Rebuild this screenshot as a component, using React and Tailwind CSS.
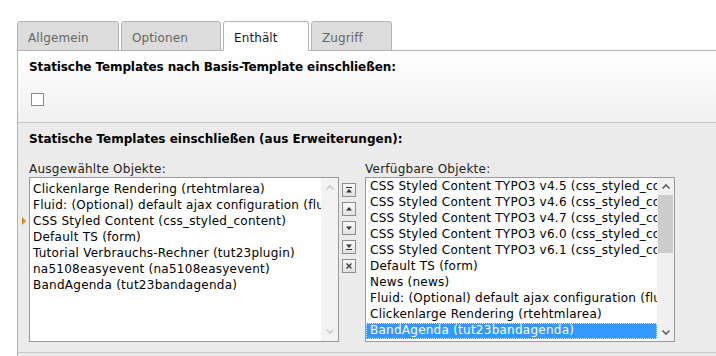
const SELECTED = [
  'Clickenlarge Rendering (rtehtmlarea)',
  'Fluid: (Optional) default ajax configuration (fluid)',
  'CSS Styled Content (css_styled_content)',
  'Default TS (form)',
  'Tutorial Verbrauchs-Rechner (tut23plugin)',
  'na5108easyevent (na5108easyevent)',
  'BandAgenda (tut23bandagenda)',
]

const AVAILABLE = [
  'CSS Styled Content TYPO3 v4.5 (css_styled_content_45)',
  'CSS Styled Content TYPO3 v4.6 (css_styled_content_46)',
  'CSS Styled Content TYPO3 v4.7 (css_styled_content_47)',
  'CSS Styled Content TYPO3 v6.0 (css_styled_content_60)',
  'CSS Styled Content TYPO3 v6.1 (css_styled_content_61)',
  'Default TS (form)',
  'News (news)',
  'Fluid: (Optional) default ajax configuration (fluid)',
  'Clickenlarge Rendering (rtehtmlarea)',
  'BandAgenda (tut23bandagenda)',
]

const TABS = [
  { label: 'Allgemein', w: 'w-[102px]' },
  { label: 'Optionen', w: 'w-[100px]' },
  { label: 'Enthält', w: 'w-[86px]', active: true },
  { label: 'Zugriff', w: 'w-[81px]' },
]

function Chevron({ up, color }) {
  return (
    <svg width="10" height="7" viewBox="0 0 10 7">
      <path d={up ? 'M1.5 5.5 L5 2 L8.5 5.5' : 'M1.5 1.5 L5 5 L8.5 1.5'} fill="none" stroke={color} strokeWidth="1.6" />
    </svg>
  )
}

function MoveButton({ kind }) {
  return (
    <div className="w-[14px] h-[14px] border border-[#8c8c8c] bg-gradient-to-b from-[#fafafa] to-[#e2e2e2] flex items-center justify-center">
      <svg width="12" height="12" viewBox="0 0 12 12">
        {kind === 'top' && (<>
          <rect x="3" y="3" width="6" height="1" fill="#333" />
          <path d="M6 5 L3 8.5 L9 8.5 Z" fill="#333" />
        </>)}
        {kind === 'up' && <path d="M6 4 L3 7.5 L9 7.5 Z" fill="#333" />}
        {kind === 'down' && <path d="M3 4.5 L9 4.5 L6 8 Z" fill="#333" />}
        {kind === 'bottom' && (<>
          <path d="M3 3.5 L9 3.5 L6 7 Z" fill="#333" />
          <rect x="3" y="8" width="6" height="1" fill="#333" />
        </>)}
        {kind === 'remove' && <path d="M3.5 3.5 L8.5 8.5 M8.5 3.5 L3.5 8.5" stroke="#333" strokeWidth="1.2" />}
      </svg>
    </div>
  )
}

export default function App() {
  return (
    <div className="w-[716px] h-[356px] overflow-hidden bg-white pt-[21px] pl-[17px] text-[12px] text-black" style={{ fontFamily: '"DejaVu Sans", Verdana, sans-serif' }}>

      {/* tabs */}
      <div className="flex items-end gap-[2px] h-[29px]">
        {TABS.map(t => (
          <div
            key={t.label}
            className={`${t.w} h-[30px] mb-[-1px] pl-[10px] pt-[7px] border border-[#b4b4b4] rounded-t-[3px] tracking-[0.1px] ${t.active ? 'bg-white border-b-white text-[#1a1a1a] relative z-10' : 'bg-[#dcdcdc] text-[#666]'}`}
          >
            {t.label}
          </div>
        ))}
      </div>

      {/* panel */}
      <div className="border-l border-t border-[#b4b4b4] w-[720px]">

        <div className="h-[72px] bg-gradient-to-b from-white to-[#f0f0f0] border-b border-[#c6c6c6] pl-[11px] pt-[8px]">
          <div className="font-bold leading-[16px] tracking-[-0.1px]">Statische Templates nach Basis-Template einschließen:</div>
          <div className="mt-[18px] ml-[2px] w-[13px] h-[13px] border border-[#8a8a8a] bg-white" />
        </div>

        <div className="h-[230px] bg-[#ebebeb] border-b border-[#c6c6c6] pl-[11px] pt-[8px]">
          <div className="font-bold leading-[16px]">Statische Templates einschließen (aus Erweiterungen):</div>

          <div className="flex mt-[15px] tracking-[0.25px]">
            <div className="w-[310px]">
              <div className="leading-[14px] text-[#222]">Ausgewählte Objekte:</div>
              <div className="relative mt-[1px] h-[165px] border border-[#9a9a9a] bg-white flex">
                <div className="flex-1 overflow-hidden pl-[3px] pt-[3px]">
                  {SELECTED.map(s => (
                    <div key={s} className="leading-[16px] whitespace-nowrap">{s}</div>
                  ))}
                </div>
                <div className="w-[17px] bg-[#f3f3f3] flex flex-col items-center justify-between py-[6px]">
                  <Chevron up color="#c8c8c8" />
                  <Chevron color="#c8c8c8" />
                </div>
                <svg className="absolute left-[-8px] top-[39px]" width="4" height="8" viewBox="0 0 4 8">
                  <path d="M0 0 L4 4 L0 8 Z" fill="#d08a1a" />
                </svg>
              </div>
            </div>

            <div className="ml-[3px] mt-[21px] flex flex-col gap-[5px]">
              <MoveButton kind="top" />
              <MoveButton kind="up" />
              <MoveButton kind="down" />
              <MoveButton kind="bottom" />
              <MoveButton kind="remove" />
            </div>

            <div className="ml-[9px] w-[310px]">
              <div className="leading-[14px] text-[#222]">Verfügbare Objekte:</div>
              <div className="mt-[1px] h-[165px] border border-[#9a9a9a] bg-white flex">
                <div className="flex-1 overflow-hidden pt-[1px]">
                  {AVAILABLE.map((s, i) => (
                    <div
                      key={s}
                      className={`h-[16px] leading-[15px] pl-[4px] whitespace-nowrap ${i === AVAILABLE.length - 1 ? 'bg-[#3399ff] text-white outline outline-1 outline-dotted outline-[#cfe6ff] outline-offset-[-1px]' : ''}`}
                    >
                      {s}
                    </div>
                  ))}
                </div>
                <div className="w-[17px] bg-[#f0f0f0] flex flex-col items-center">
                  <div className="h-[17px] flex items-center justify-center"><Chevron up color="#606060" /></div>
                  <div className="w-[15px] h-[58px] bg-[#cdcdcd]" />
                  <div className="flex-1" />
                  <div className="h-[17px] flex items-center justify-center"><Chevron color="#606060" /></div>
                </div>
              </div>
            </div>
          </div>
        </div>

        <div className="h-[20px] bg-[#ebebeb]" />
      </div>
    </div>
  )
}
